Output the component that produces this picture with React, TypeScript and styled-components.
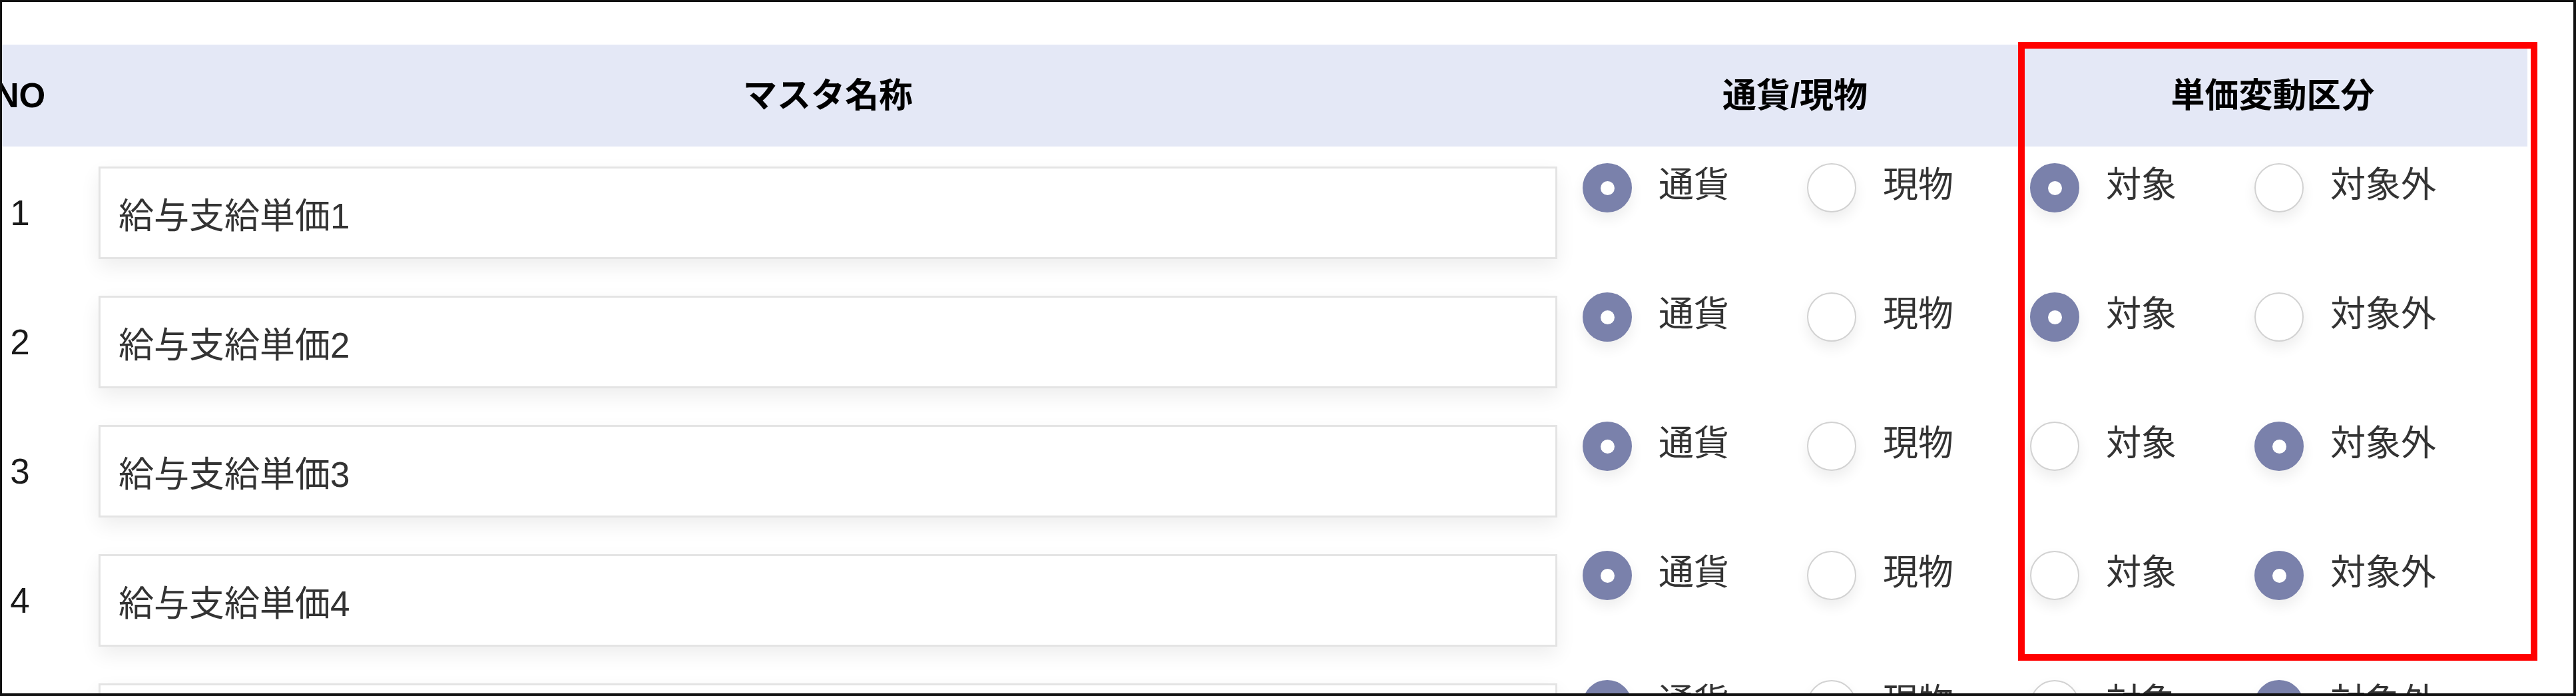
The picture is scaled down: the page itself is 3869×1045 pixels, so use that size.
import React from "react";
import styled, { createGlobalStyle } from "styled-components";

const GlobalStyle = createGlobalStyle`
  html, body { margin: 0; padding: 0; background: #ffffff; }
  body { font-family: "Liberation Sans", "Noto Sans CJK JP", sans-serif; }
  *, *::before, *::after { box-sizing: border-box; }
`;

const Frame = styled.div`
  position: relative;
  width: 3869px;
  height: 1045px;
  border-style: solid;
  border-color: #111111;
  border-width: 3px 4px 4px 3px;
  overflow: hidden;
  background: #ffffff;
`;

const Table = styled.div`
  width: 3793px;
  margin-top: 64px;
  display: grid;
  grid-template-columns: 145px 2213px 670px 765px;
`;

const HeaderCell = styled.div<{ $padRight?: number }>`
  height: 153px;
  background: #e4e8f6;
  display: flex;
  align-items: center;
  justify-content: center;
  padding-right: ${(p) => p.$padRight ?? 0}px;
  font-family: "Liberation Sans", "Noto Sans CJK JP", sans-serif;
  font-weight: bold;
  font-size: 51px;
  line-height: 1;
  color: #000000;
  white-space: nowrap;
`;

const NumberCell = styled.div`
  height: 194px;
  padding: 30px 91px 25px 0;
  display: flex;
  align-items: center;
  justify-content: center;
  font-size: 53px;
  line-height: 1;
  color: #1a1a1a;
`;

const NameCell = styled.div`
  height: 194px;
  padding: 30px 22px 25px 0;
`;

const NameInput = styled.input`
  display: block;
  width: 100%;
  height: 139px;
  padding: 0 27px;
  border: 3px solid #e4e4e4;
  border-radius: 0;
  background: #ffffff;
  box-shadow: 0 12px 28px rgba(0, 0, 0, 0.07);
  font-family: "Liberation Sans", "Noto Sans CJK JP", sans-serif;
  font-size: 53px;
  color: #333333;
  outline: none;
`;

const OptionCell = styled.div<{ $padLeft: number }>`
  height: 194px;
  padding: 25px 0 0 ${(p) => p.$padLeft}px;
  display: flex;
  align-items: flex-start;
  gap: 117px;
`;

const Option = styled.label`
  display: flex;
  align-items: center;
  gap: 40px;
`;

const RadioMark = styled.span<{ $checked: boolean }>`
  position: relative;
  flex: none;
  width: 74px;
  height: 74px;
  border-radius: 50%;
  border: 2px solid ${(p) => (p.$checked ? "#7a81ab" : "#d2d2d2")};
  background: ${(p) => (p.$checked ? "#7a81ab" : "#ffffff")};
  box-shadow: 0 10px 20px rgba(0, 0, 0, 0.07);

  &::after {
    content: "";
    display: ${(p) => (p.$checked ? "block" : "none")};
    position: absolute;
    left: 50%;
    top: 50%;
    width: 21px;
    height: 21px;
    margin: -10.5px 0 0 -10.5px;
    border-radius: 50%;
    background: #ffffff;
  }
`;

const OptionText = styled.span`
  font-size: 53px;
  line-height: 1;
  padding-bottom: 10px;
  color: #333333;
  white-space: nowrap;
`;

const Highlight = styled.div`
  position: absolute;
  left: 3028px;
  top: 60px;
  width: 780px;
  height: 929px;
  border: 10px solid #ff0000;
  pointer-events: none;
`;

type Row = {
  no: number;
  name: string;
  currency: "通貨" | "現物";
  variation: "対象" | "対象外";
};

const rows: Row[] = [
  { no: 1, name: "給与支給単価1", currency: "通貨", variation: "対象" },
  { no: 2, name: "給与支給単価2", currency: "通貨", variation: "対象" },
  { no: 3, name: "給与支給単価3", currency: "通貨", variation: "対象外" },
  { no: 4, name: "給与支給単価4", currency: "通貨", variation: "対象外" },
  { no: 5, name: "給与支給単価5", currency: "通貨", variation: "対象外" },
];

const RadioGroup: React.FC<{ options: string[]; value: string; padLeft: number }> = ({
  options,
  value,
  padLeft,
}) => (
  <OptionCell $padLeft={padLeft}>
    {options.map((o) => (
      <Option key={o}>
        <RadioMark $checked={o === value} />
        <OptionText>{o}</OptionText>
      </Option>
    ))}
  </OptionCell>
);

export default function App() {
  return (
    <>
      <GlobalStyle />
      <Frame>
        <Table>
          <HeaderCell $padRight={91}>NO</HeaderCell>
          <HeaderCell $padRight={22}>マスタ名称</HeaderCell>
          <HeaderCell>通貨/現物</HeaderCell>
          <HeaderCell>単価変動区分</HeaderCell>
          {rows.map((r) => (
            <React.Fragment key={r.no}>
              <NumberCell>{r.no}</NumberCell>
              <NameCell>
                <NameInput readOnly value={r.name} />
              </NameCell>
              <RadioGroup options={["通貨", "現物"]} value={r.currency} padLeft={16} />
              <RadioGroup options={["対象", "対象外"]} value={r.variation} padLeft={18} />
            </React.Fragment>
          ))}
        </Table>
        <Highlight />
      </Frame>
    </>
  );
}
